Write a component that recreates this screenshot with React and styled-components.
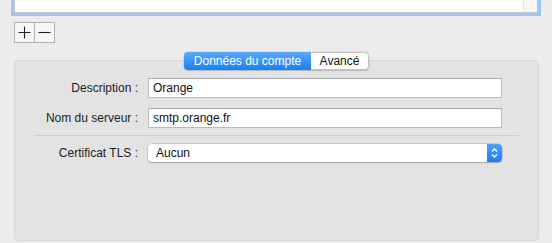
import styled, { createGlobalStyle } from "styled-components";

const GlobalStyle = createGlobalStyle`
  html, body {
    margin: 0;
    padding: 0;
    background: #ececec;
    font-family: "Liberation Sans", Arial, sans-serif;
    font-size: 12px;
    color: #1e1e1e;
    overflow: hidden;
  }
`;

const Page = styled.div`
  width: 552px;
  height: 243px;
  display: flex;
  flex-direction: column;
`;

const ListBox = styled.div`
  box-sizing: border-box;
  margin-left: 11px;
  width: 530px;
  height: 16px;
  border: 3px solid #9dc6f6;
  border-top: none;
  display: flex;
`;

const ListBody = styled.div`
  flex: 1;
  background: #fff;
  border-bottom: 1px solid #c6c6c6;
  border-left: 1px solid #c6c6c6;
`;

const ScrollStrip = styled.div`
  width: 13px;
  background: #f7f7f7;
  border-left: 1px solid #e2e2e2;
  border-right: 1px solid #c6c6c6;
  border-bottom: 1px solid #c6c6c6;
`;

const ButtonBar = styled.div`
  display: flex;
  margin: 6px 0 0 14px;
`;

const SmallButton = styled.button`
  box-sizing: border-box;
  width: ${(p) => (p.$first ? 21 : 20)}px;
  height: 21px;
  padding: 0;
  border: 1px solid #b1b1b1;
  border-left: ${(p) => (p.$first ? "1px solid #b1b1b1" : "none")};
  background: #f7f7f7;
  display: flex;
  align-items: center;
  justify-content: center;
`;

const Group = styled.div`
  box-sizing: border-box;
  margin: 17px 0 0 14px;
  width: 525px;
  height: 181px;
  background: #e3e3e3;
  border: 1px solid #d8d8d8;
  border-radius: 5px;
  display: flex;
  flex-direction: column;
`;

const Tabs = styled.div`
  align-self: center;
  margin-top: -9px;
  display: flex;
  height: 18px;
  border-radius: 4px;
  box-shadow: 0 0 0 0.5px rgba(0, 0, 0, 0.12), 0 1px 1px rgba(0, 0, 0, 0.15);
`;

const Tab = styled.div`
  box-sizing: border-box;
  height: 18px;
  display: flex;
  align-items: center;
  justify-content: center;
  width: ${(p) => p.$w}px;
  font-size: 12px;
  ${(p) =>
    p.$active
      ? `
    color: #fff;
    background: linear-gradient(#5aa9fb, #1a7ff7);
    border-radius: 4px 0 0 4px;
  `
      : `
    color: #111;
    background: #fff;
    border: 1px solid #c4c4c4;
    border-left: none;
    border-radius: 0 4px 4px 0;
  `}
`;

const Form = styled.div`
  display: flex;
  flex-direction: column;
  padding-top: 8px;
`;

const Row = styled.div`
  display: flex;
  align-items: center;
  gap: 10px;
  margin-bottom: ${(p) => p.$mb || 0}px;
`;

const Label = styled.div`
  width: 123px;
  text-align: right;
  white-space: nowrap;
  color: #1c1c1c;
`;

const Field = styled.div`
  box-sizing: border-box;
  width: 354px;
  height: 20px;
  background: #fff;
  border: 1px solid #bcbcbc;
  border-top-color: #a9a9a9;
  padding-left: 4px;
  display: flex;
  align-items: center;
  color: #111;
`;

const Separator = styled.div`
  height: 1px;
  background: #cdcdcd;
  margin: 7px 19px 8px 19px;
`;

const Popup = styled.div`
  box-sizing: border-box;
  width: 354px;
  height: 18px;
  background: #fff;
  border-radius: 4px;
  box-shadow: 0 0 0 0.5px rgba(0, 0, 0, 0.2), 0 1px 1px rgba(0, 0, 0, 0.2);
  display: flex;
  overflow: hidden;
`;

const PopupText = styled.div`
  flex: 1;
  padding-left: 8px;
  display: flex;
  align-items: center;
  color: #111;
`;

const PopupArrow = styled.div`
  width: 15px;
  background: linear-gradient(#4ea2fb, #1b7ff7);
  display: flex;
  align-items: center;
  justify-content: center;
`;

const Chevrons = () => (
  <svg width="9" height="12" viewBox="0 0 9 12">
    <path d="M2 4.5 L4.5 2 L7 4.5" fill="none" stroke="#fff" strokeWidth="1.3" />
    <path d="M2 7.5 L4.5 10 L7 7.5" fill="none" stroke="#fff" strokeWidth="1.3" />
  </svg>
);

const App = () => {
  return (
    <>
      <GlobalStyle />
      <Page>
        <ListBox>
          <ListBody />
          <ScrollStrip />
        </ListBox>
        <ButtonBar>
          <SmallButton $first>
            <svg width="13" height="13" viewBox="0 0 13 13">
              <path d="M6.5 0.5 V12.5 M0.5 6.5 H12.5" stroke="#222" strokeWidth="1.1" />
            </svg>
          </SmallButton>
          <SmallButton>
            <svg width="13" height="13" viewBox="0 0 13 13">
              <path d="M0.5 6.5 H12.5" stroke="#222" strokeWidth="1.1" />
            </svg>
          </SmallButton>
        </ButtonBar>
        <Group>
          <Tabs>
            <Tab $active $w={127}>Données du compte</Tab>
            <Tab $w={58}>Avancé</Tab>
          </Tabs>
          <Form>
            <Row $mb={10}>
              <Label>Description :</Label>
              <Field>Orange</Field>
            </Row>
            <Row>
              <Label>Nom du serveur :</Label>
              <Field>smtp.orange.fr</Field>
            </Row>
            <Separator />
            <Row>
              <Label>Certificat TLS :</Label>
              <Popup>
                <PopupText>Aucun</PopupText>
                <PopupArrow>
                  <Chevrons />
                </PopupArrow>
              </Popup>
            </Row>
          </Form>
        </Group>
      </Page>
    </>
  );
};

export default App;
